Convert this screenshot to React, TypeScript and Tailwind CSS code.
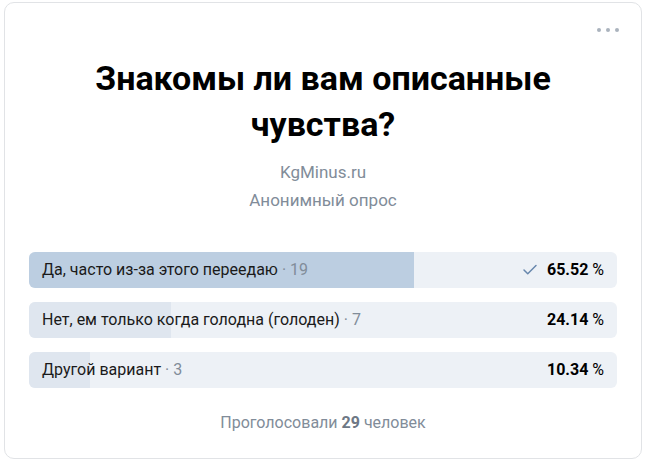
import { Check } from "lucide-react";

const OPTIONS = [
  { text: "Да, часто из-за этого переедаю", votes: 19, pct: 65.52, chosen: true },
  { text: "Нет, ем только когда голодна (голоден)", votes: 7, pct: 24.14, chosen: false },
  { text: "Другой вариант", votes: 3, pct: 10.34, chosen: false },
];

export default function App() {
  return (
    <div className="min-h-screen bg-white pt-[2px] pl-[4px] font-['Roboto','Liberation_Sans',sans-serif]">
      <div className="relative w-[638px] h-[457px] rounded-[10px] border border-[#e1e3e6] px-[24px] pt-[52px]">
        <div className="absolute right-[22px] top-[25px] flex gap-[5px]">
          <span className="w-[4px] h-[4px] rounded-full bg-[#aab3bd]" />
          <span className="w-[4px] h-[4px] rounded-full bg-[#aab3bd]" />
          <span className="w-[4px] h-[4px] rounded-full bg-[#aab3bd]" />
        </div>

        <h2 className="text-center text-[34px] leading-[46px] font-bold text-black px-[50px]">
          Знакомы ли вам описанные чувства?
        </h2>

        <div className="mt-[11px] text-center text-[17px] leading-[28px] text-[#818c99]">
          <div>KgMinus.ru</div>
          <div>Анонимный опрос</div>
        </div>

        <div className="mt-[38px] flex flex-col gap-[14px]">
          {OPTIONS.map((o, i) => (
            <div key={i} className="relative h-[36px] rounded-[6px] bg-[#edf1f6] overflow-hidden">
              <div
                className={`absolute inset-y-0 left-0 ${o.chosen ? "bg-[#bccee1]" : "bg-[#dfe6ef]"}`}
                style={{ width: `${o.pct}%` }}
              />
              <div className="relative flex h-full items-center justify-between px-[13px] text-[16px]">
                <span className="text-[#1a1a1a]">
                  {o.text} <span className="text-[#818c99]">· {o.votes}</span>
                </span>
                <span className="flex items-center gap-[8px]">
                  {o.chosen && <Check className="w-[18px] h-[18px] text-[#6787ad]" strokeWidth={2} />}
                  <span className="text-black">
                    <b>{o.pct.toFixed(2)}</b> %
                  </span>
                </span>
              </div>
            </div>
          ))}
        </div>

        <div className="mt-[25px] text-center text-[16px] leading-[20px] text-[#818c99]">
          Проголосовали <b className="text-[#6d7885]">29</b> человек
        </div>
      </div>
    </div>
  );
}
